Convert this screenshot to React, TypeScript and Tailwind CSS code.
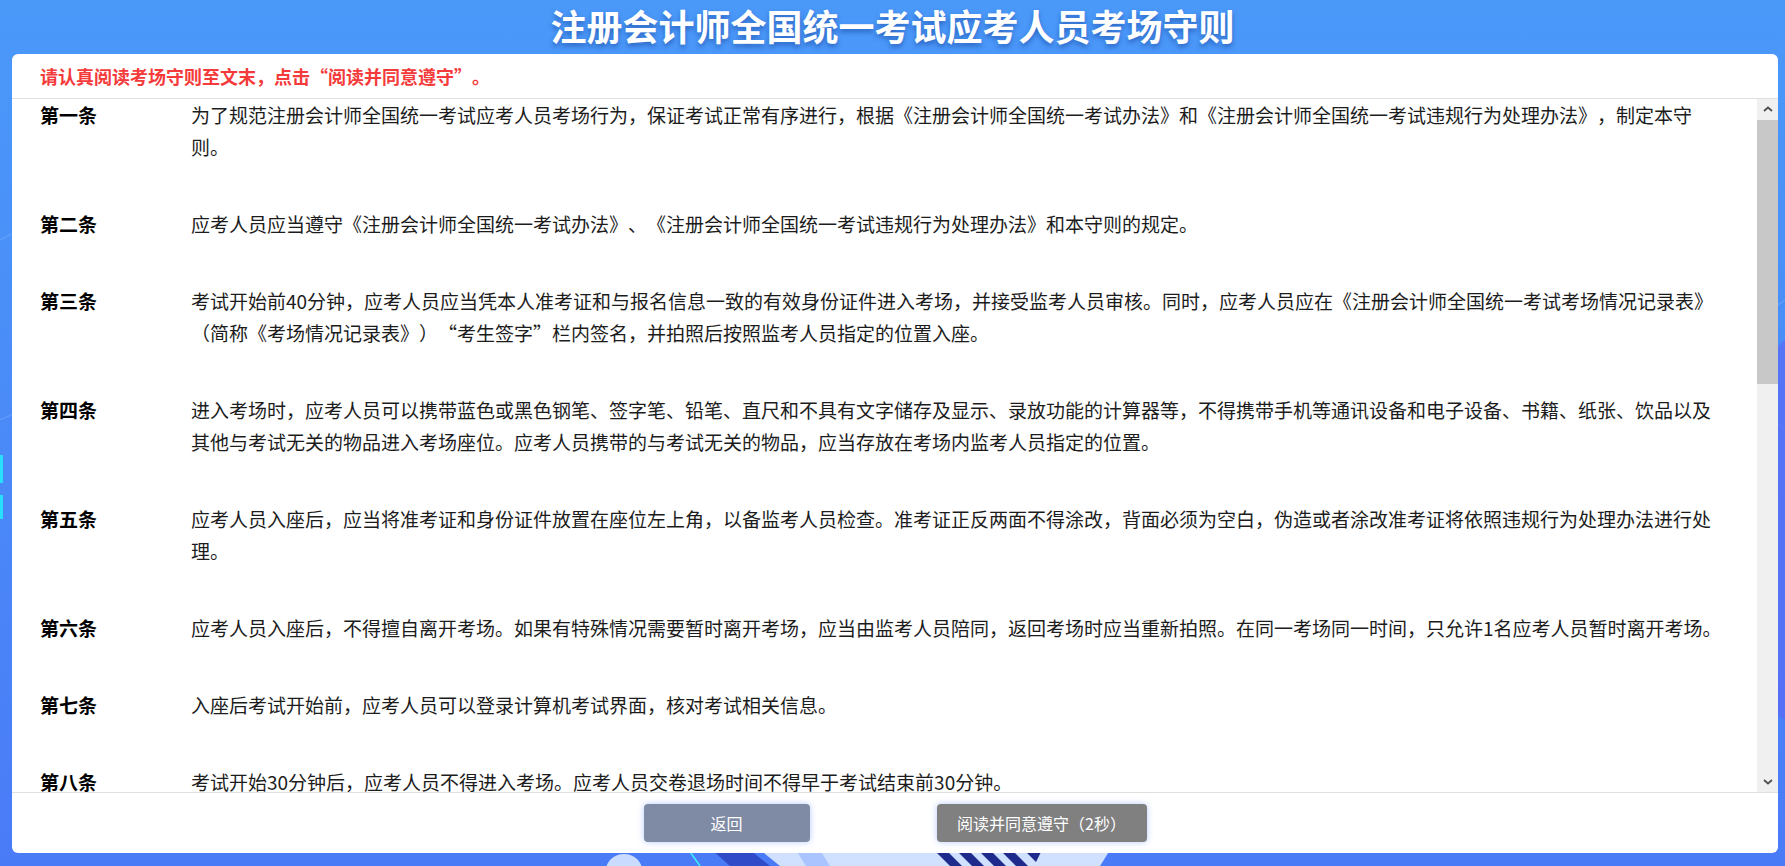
import React from 'react'

const rules: { no: string; text: string }[] = [
  {
    no: '第一条',
    text: '为了规范注册会计师全国统一考试应考人员考场行为，保证考试正常有序进行，根据《注册会计师全国统一考试办法》和《注册会计师全国统一考试违规行为处理办法》，制定本守则。',
  },
  {
    no: '第二条',
    text: '应考人员应当遵守《注册会计师全国统一考试办法》、《注册会计师全国统一考试违规行为处理办法》和本守则的规定。',
  },
  {
    no: '第三条',
    text: '考试开始前40分钟，应考人员应当凭本人准考证和与报名信息一致的有效身份证件进入考场，并接受监考人员审核。同时，应考人员应在《注册会计师全国统一考试考场情况记录表》（简称《考场情况记录表》）“考生签字”栏内签名，并拍照后按照监考人员指定的位置入座。',
  },
  {
    no: '第四条',
    text: '进入考场时，应考人员可以携带蓝色或黑色钢笔、签字笔、铅笔、直尺和不具有文字储存及显示、录放功能的计算器等，不得携带手机等通讯设备和电子设备、书籍、纸张、饮品以及其他与考试无关的物品进入考场座位。应考人员携带的与考试无关的物品，应当存放在考场内监考人员指定的位置。',
  },
  {
    no: '第五条',
    text: '应考人员入座后，应当将准考证和身份证件放置在座位左上角，以备监考人员检查。准考证正反两面不得涂改，背面必须为空白，伪造或者涂改准考证将依照违规行为处理办法进行处理。',
  },
  {
    no: '第六条',
    text: '应考人员入座后，不得擅自离开考场。如果有特殊情况需要暂时离开考场，应当由监考人员陪同，返回考场时应当重新拍照。在同一考场同一时间，只允许1名应考人员暂时离开考场。',
  },
  { no: '第七条', text: '入座后考试开始前，应考人员可以登录计算机考试界面，核对考试相关信息。' },
  { no: '第八条', text: '考试开始30分钟后，应考人员不得进入考场。应考人员交卷退场时间不得早于考试结束前30分钟。' },
  {
    no: '第九条',
    text: '考试开始后，应考人员应当按照规定独立答题，不得在考场内交头接耳、左顾右盼、打手势或者以其他方式传递信息。',
  },
  {
    no: '第十条',
    text: '应考人员在考试过程中遇到计算机故障、网络故障或者其他异常情况，应当举手示意，由监考人员处理。',
  },
  {
    no: '第十一条',
    text: '应考人员应当遵守考场纪律，保持考场安静，不得吸烟，不得喧哗，不得有其他影响考场秩序的行为。',
  },
  {
    no: '第十二条',
    text: '应考人员不得将草稿纸带出考场。考试结束后，应考人员应当将草稿纸交给监考人员。',
  },
  {
    no: '第十三条',
    text: '考试结束时间到，应考人员应当停止答题，按照监考人员指令有序离开考场。',
  },
  {
    no: '第十四条',
    text: '应考人员应当服从监考人员的管理，不得以任何理由妨碍监考人员正常履行职责。',
  },
  {
    no: '第十五条',
    text: '应考人员违反本守则的，由监考人员根据《注册会计师全国统一考试违规行为处理办法》进行处理。',
  },
  { no: '第十六条', text: '本守则由财政部注册会计师考试委员会办公室负责解释。' },
]

function Backdrop() {
  // decorative tech graphic behind the card, mostly hidden
  return (
    <svg className="absolute inset-0 w-full h-full" viewBox="0 0 1785 866" preserveAspectRatio="none">
      <g stroke="#8fc0ff" strokeWidth="1.2" fill="none" opacity="0.35">
        <path d="M0 240 L120 180 L260 260" />
        <path d="M0 420 L90 380 L40 560" />
        <path d="M1785 300 L1700 360 L1785 430" />
      </g>
      <rect x="0" y="455" width="3" height="28" fill="#27e0ff" />
      <rect x="0" y="495" width="3" height="24" fill="#27e0ff" />
      <path d="M1740 380 L1785 340 L1785 720 L1740 690 Z" fill="#5a6af5" opacity="0.7" />
      <ellipse cx="624" cy="870" rx="18" ry="16" fill="#c9dcff" />
      <path d="M686 846 L700 866" stroke="#3ef0ff" strokeWidth="1.5" />
      <path d="M712 850 L750 850 L770 866 L730 866 Z" fill="#2f4bc8" />
      <path d="M760 850 L1110 850 L1100 866 L780 866 Z" fill="#cfe1ff" />
      <path d="M796 850 L820 850 L830 866 L806 866 Z" fill="#a9c4ff" />
      <g fill="#1e2a8c">
        <path d="M934 850 L946 850 L962 866 L950 866 Z" />
        <path d="M956 850 L968 850 L984 866 L972 866 Z" />
        <path d="M978 850 L990 850 L1006 866 L994 866 Z" />
        <path d="M1000 850 L1012 850 L1028 866 L1016 866 Z" />
        <path d="M1024 850 L1042 850 L1036 862 Z" />
      </g>
    </svg>
  )
}

function Chevron({ up }: { up?: boolean }) {
  return (
    <svg width="10" height="6" viewBox="0 0 10 6">
      <polyline
        points={up ? '1,5 5,1.5 9,5' : '1,1 5,4.5 9,1'}
        fill="none"
        stroke="#505050"
        strokeWidth="1.8"
      />
    </svg>
  )
}

// classic windows-style scrollbar, drawn since headless chrome uses overlay bars
function ScrollBar() {
  return (
    <div className="flex w-[21px] shrink-0 flex-col bg-[#f0f0f0]">
      <div className="flex h-[20px] items-center justify-center">
        <Chevron up />
      </div>
      <div className="mt-[1px] h-[264px] bg-[#c8c8c8]" />
      <div className="flex-1" />
      <div className="flex h-[20px] items-center justify-center">
        <Chevron />
      </div>
    </div>
  )
}

export default function App() {
  return (
    <div
      className="relative h-[866px] w-full overflow-hidden bg-gradient-to-b from-[#4a99f9] via-[#4a8af8] to-[#4a7bf7] [text-spacing-trim:space-all]"
      style={{ fontFamily: '"Noto Sans CJK SC", "Noto Sans", sans-serif' }}
    >
      <Backdrop />
      <div className="relative flex h-full flex-col">
        <div className="flex h-[54px] shrink-0 items-center justify-center pb-[4px]">
          <h1 className="text-[36px] font-bold leading-none text-white [text-shadow:0_3px_5px_rgba(20,60,150,0.55)]">
            注册会计师全国统一考试应考人员考场守则
          </h1>
        </div>

        <div className="mb-[13px] ml-[12px] mr-[7px] flex min-h-0 flex-1 flex-col rounded-[6px] bg-white">
          <div className="flex h-[45px] shrink-0 items-center border-b border-[#e0e0e0] pl-[28px]">
            <p className="text-[18px] font-bold text-[#f43a3a]">请认真阅读考场守则至文末，点击“阅读并同意遵守”。</p>
          </div>

          <div className="flex min-h-0 flex-1">
            <div className="min-w-0 flex-1 overflow-y-scroll pl-[28px] pr-[31px] [scrollbar-width:none]">
              {rules.map((r) => (
                <div key={r.no} className="mb-[45px] grid grid-cols-[151px_1fr] text-[19px] leading-[32px]">
                  <div className="font-bold text-black">{r.no}</div>
                  <div className="text-[#1c1c1c]">{r.text}</div>
                </div>
              ))}
            </div>
            <ScrollBar />
          </div>

          <div className="flex h-[61px] shrink-0 items-center justify-center gap-[127px] border-t border-[#e0e0e0]">
            <button className="h-[38px] w-[166px] rounded-[4px] bg-[#7f8aa4] text-[16px] text-white shadow-[0_0_6px_rgba(90,140,255,0.45)]">
              返回
            </button>
            <button className="h-[38px] w-[210px] rounded-[4px] bg-[#808080] text-[16px] text-white shadow-[0_0_6px_rgba(90,140,255,0.45)]">
              阅读并同意遵守（2秒）
            </button>
          </div>
        </div>
      </div>
    </div>
  )
}
